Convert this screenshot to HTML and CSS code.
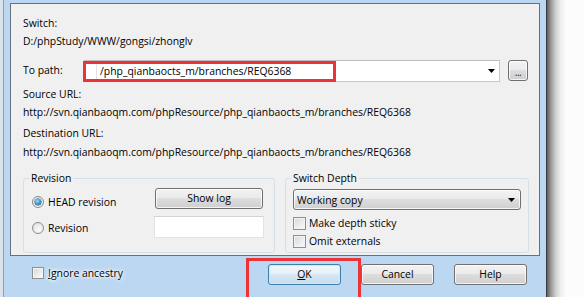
FILE: index.html
```html
<!DOCTYPE html>
<html>
<head>
<meta charset="utf-8">
<link rel="stylesheet" href="styles.css">
</head>
<body>
<div class="screen">
  <div class="window">
    <div class="panel">
      <div class="line first">Switch:</div>
      <div class="line tight">D:/phpStudy/WWW/gongsi/zhonglv</div>

      <div class="topath">
        <div class="topath-label">To path:</div>
        <div class="combo">
          <span class="combo-text">/php_qianbaocts_m/branches/REQ6368</span>
          <svg class="arrow" width="7" height="4" viewBox="0 0 7 4"><polygon points="0,0 7,0 3.5,4" fill="#000"/></svg>
          <div class="mark mark-path"></div>
        </div>
        <div class="btn dots">...</div>
      </div>

      <div class="line src">Source URL:</div>
      <div class="line tight">http://svn.qianbaoqm.com/phpResource/php_qianbaocts_m/branches/REQ6368</div>
      <div class="line dst">Destination URL:</div>
      <div class="line dst2">http://svn.qianbaoqm.com/phpResource/php_qianbaocts_m/branches/REQ6368</div>

      <div class="groups">
        <fieldset class="group rev">
          <legend>Revision</legend>
          <div class="rev-body">
            <div class="radios">
              <div class="opt"><span class="radio on"><span class="dot"></span></span>HEAD revision</div>
              <div class="opt second"><span class="radio"></span>Revision</div>
            </div>
            <div class="rev-right">
              <div class="btn showlog">Show log</div>
              <div class="edit"></div>
            </div>
          </div>
        </fieldset>
        <fieldset class="group depth">
          <legend>Switch Depth</legend>
          <div class="dropdown">
            <span>Working copy</span>
            <svg class="arrow" width="7" height="4" viewBox="0 0 7 4"><polygon points="0,0 7,0 3.5,4" fill="#000"/></svg>
          </div>
          <div class="opt chk1"><span class="check"></span>Make depth sticky</div>
          <div class="opt chk2"><span class="check"></span>Omit externals</div>
        </fieldset>
      </div>
    </div>

    <div class="bottom">
      <div class="opt ignore"><span class="check"></span><span class="glow"><u>I</u>gnore ancestry</span></div>
      <div class="buttons">
        <div class="okwrap">
          <div class="btn push default"><u>O</u>K</div>
          <div class="mark mark-ok"></div>
        </div>
        <div class="btn push">Cancel</div>
        <div class="btn push">Help</div>
      </div>
    </div>
  </div>
  <div class="shadow"></div>
</div>
</body>
</html>
```
FILE: styles.css
```css
html, body {
  margin: 0;
  padding: 0;
}
body {
  font-family: "Open Sans", "Noto Sans", sans-serif;
  font-size: 10.4px;
  color: #000;
  background: #fcfcfc;
  overflow: hidden;
}
.screen {
  display: flex;
  width: 584px;
  height: 297px;
  overflow: hidden;
}
.window {
  box-sizing: border-box;
  width: 547px;
  height: 297px;
  flex: none;
  background: #bcd7f1;
  border-right: 1px solid #3b3b3b;
  box-shadow: inset 3px 0 0 #dbe4ec, inset 4px 0 0 #8d9fb2;
  padding: 3px 6px 0 10px;
  display: flex;
  flex-direction: column;
}
.shadow {
  flex: 1;
  background: linear-gradient(to right, #5e5e5e 0px, #9a9a9a 4px, #d2d2d2 9px, #f0f0f0 14px, #fcfcfc 19px);
}
.panel {
  box-sizing: border-box;
  height: 253px;
  border: 1px solid #66717c;
  background: #f0f0f0;
  padding: 0 10px 0 12px;
  display: flex;
  flex-direction: column;
}
.line {
  line-height: 16px;
  height: 16px;
  white-space: nowrap;
}
.first { margin-top: 11px; }
.tight { margin-top: 2px; }
.src { margin-top: 4px; }
.dst { margin-top: 5px; }
.dst2 { margin-top: 3px; }

.topath {
  margin-top: 11px;
  display: flex;
  align-items: flex-start;
  height: 22px;
}
.topath-label {
  width: 61px;
  line-height: 16px;
  margin-top: 2px;
}
.combo {
  position: relative;
  box-sizing: border-box;
  width: 416px;
  height: 22px;
  background: #fff;
  border: 1px solid #c5c9cf;
  border-top-color: #b9bdc3;
  display: flex;
  align-items: center;
}
.combo-text {
  margin-left: 11px;
  padding-left: 3px;
  border-left: 1px solid #e4e4e4;
  line-height: 16px;
  white-space: nowrap;
}
.combo .arrow {
  margin-left: auto;
  margin-right: 4px;
}
.mark {
  position: absolute;
  box-sizing: border-box;
  border: 3px solid #ec3437;
}
.mark-path {
  left: -2px;
  top: 0px;
  width: 253px;
  height: 21px;
}
.btn {
  box-sizing: border-box;
  border: 1px solid #707070;
  border-radius: 3px;
  background: linear-gradient(#f2f2f2 0%, #ebebeb 45%, #dddddd 50%, #cfcfcf 100%);
  box-shadow: inset 0 0 0 1px rgba(255,255,255,0.75);
  text-align: center;
  white-space: nowrap;
}
.dots {
  width: 20px;
  height: 21px;
  margin-left: 8px;
  line-height: 22px;
  color: #1b1b5e;
  font-size: 10px;
  letter-spacing: -0.5px;
}

.groups {
  margin-top: 10px;
  height: 83px;
  display: flex;
  gap: 10px;
}
.group {
  box-sizing: border-box;
  margin: 0;
  height: 83px;
  min-width: 0;
  border: 1px solid #d5dfe5;
  border-radius: 3px;
}
.group legend {
  line-height: 16px;
  padding: 0 2px;
}
.rev {
  width: 252px;
  padding: 0 10px 0 8px;
}
.rev legend { margin-left: -3px; }
.rev-body {
  display: flex;
  justify-content: space-between;
}
.radios {
  padding-top: 8px;
}
.opt {
  display: flex;
  align-items: center;
  line-height: 16px;
  height: 16px;
  white-space: nowrap;
}
.opt.second { margin-top: 10px; }
.radio {
  box-sizing: border-box;
  width: 12px;
  height: 12px;
  border-radius: 50%;
  border: 1px solid #8a8c8e;
  background: radial-gradient(circle at 60% 65%, #fbfbfb 0%, #e9e9e9 60%, #d2d3d5 100%);
  margin-right: 4px;
  display: flex;
  align-items: center;
  justify-content: center;
}
.radio .dot {
  width: 6px;
  height: 6px;
  border-radius: 50%;
  background: radial-gradient(circle at 40% 35%, #9fe0fb 0%, #3fa0dc 45%, #0f4f86 100%);
  box-shadow: 0 0 0 0.5px #1b4c75;
}
.rev-right {
  display: flex;
  flex-direction: column;
  align-items: center;
  width: 110px;
}
.showlog {
  margin-top: 2px;
  width: 108px;
  height: 21px;
  line-height: 19px;
}
.edit {
  box-sizing: border-box;
  margin-top: 7px;
  width: 110px;
  height: 22px;
  background: #fff;
  border: 1px solid #e2e3ea;
  border-top-color: #d0d3d8;
}

.depth {
  width: 244px;
  padding: 0 6px 0 7px;
}
.depth legend { margin-left: -2px; }
.dropdown {
  box-sizing: border-box;
  margin-top: 3px;
  width: 228px;
  height: 21px;
  border: 1px solid #707070;
  border-radius: 3px;
  background: linear-gradient(#f2f2f2 0%, #ebebeb 45%, #dddddd 50%, #cfcfcf 100%);
  box-shadow: inset 0 0 0 1px rgba(255,255,255,0.75);
  display: flex;
  align-items: center;
  padding-left: 3px;
  line-height: 16px;
}
.dropdown .arrow {
  margin-left: auto;
  margin-right: 5px;
}
.check {
  box-sizing: border-box;
  width: 13px;
  height: 13px;
  border: 1px solid #8e8f8f;
  background: linear-gradient(135deg, #d4d6d9 0%, #e9eaeb 50%, #fbfbfb 100%);
  box-shadow: inset 0 0 0 1px #f4f4f4;
  margin-right: 3px;
  flex: none;
}
.chk1 { margin-top: 5px; }
.chk2 { margin-top: 2px; }

.bottom {
  position: relative;
  display: flex;
  align-items: flex-start;
  padding: 8px 13px 0 22px;
  height: 41px;
  box-sizing: border-box;
}
.ignore {
  margin-top: 1px;
}
.ignore .check {
  width: 12px;
  height: 12px;
  margin-right: 4px;
}
.glow {
  text-shadow: 0 0 6px #fff, 0 0 4px #fff, 0 0 2px #fff;
}
.buttons {
  margin-left: auto;
  display: flex;
  gap: 20px;
}
.okwrap {
  position: relative;
}
.push {
  width: 73px;
  height: 21px;
  line-height: 19px;
}
.default {
  border-color: #3c7fb1;
  box-shadow: inset 0 0 0 1px #c9ecfc;
  background: linear-gradient(#f3f8fb 0%, #e8f1f8 45%, #d7e7f3 50%, #c8dceb 100%);
}
.mark-ok {
  left: -22px;
  top: -6px;
  width: 115px;
  height: 48px;
}
```
